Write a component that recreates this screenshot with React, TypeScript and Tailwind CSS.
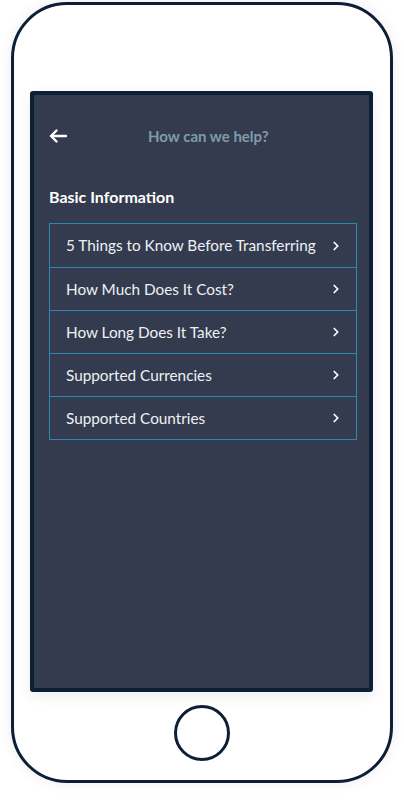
import { ChevronRight } from 'lucide-react';

const topics = [
  '5 Things to Know Before Transferring',
  'How Much Does It Cost?',
  'How Long Does It Take?',
  'Supported Currencies',
  'Supported Countries',
];

export default function App() {
  return (
    <div className="w-[404px] h-[804px] bg-white pt-[2px] pl-[11px]" style={{ fontFamily: 'Lato, "Open Sans", sans-serif' }}>
      {/* Phone body */}
      <div className="w-[382px] h-[781px] rounded-[56px] border-[3px] border-[#0c1f36] bg-white shadow-[0_0_14px_rgba(0,0,0,0.08)] flex flex-col items-start pt-[86px] pl-[16px]">
        {/* Screen */}
        <div className="w-[343px] h-[601px] rounded-[3px] border-4 border-[#0c1f36] bg-[#343b4e] shadow-[0_4px_14px_rgba(0,0,0,0.08)] px-[15px]">
          <div className="flex items-center h-[34px] mt-[24px]">
            <svg width="18" height="14" viewBox="0 0 18 14" fill="none">
              <path d="M17 7H2M7.5 1.5L2 7l5.5 5.5" stroke="#ffffff" strokeWidth="2.4" strokeLinecap="round" strokeLinejoin="round" />
            </svg>
            <span className="ml-[81px] text-[15px] font-bold text-[#7f9bab]">How can we help?</span>
          </div>

          <h2 className="mt-[34px] text-[16px] font-bold text-white leading-[20px]">Basic Information</h2>

          <div className="mt-[16px] w-[308px] border border-[#2b88ae]">
            {topics.map((t, i) => (
              <div
                key={t}
                className={`h-[43px] flex items-center justify-between pl-[16px] pr-[13px] ${i > 0 ? 'border-t border-[#2b88ae]' : ''}`}
              >
                <span className="text-[15.3px] text-[#eef1f4]">{t}</span>
                <ChevronRight size={14} strokeWidth={3} className="text-white" />
              </div>
            ))}
          </div>
        </div>

        {/* Home button */}
        <div className="mt-[13px] ml-[144px] w-[56px] h-[56px] rounded-full border-[3px] border-[#0c1f36]" />
      </div>
    </div>
  );
}
